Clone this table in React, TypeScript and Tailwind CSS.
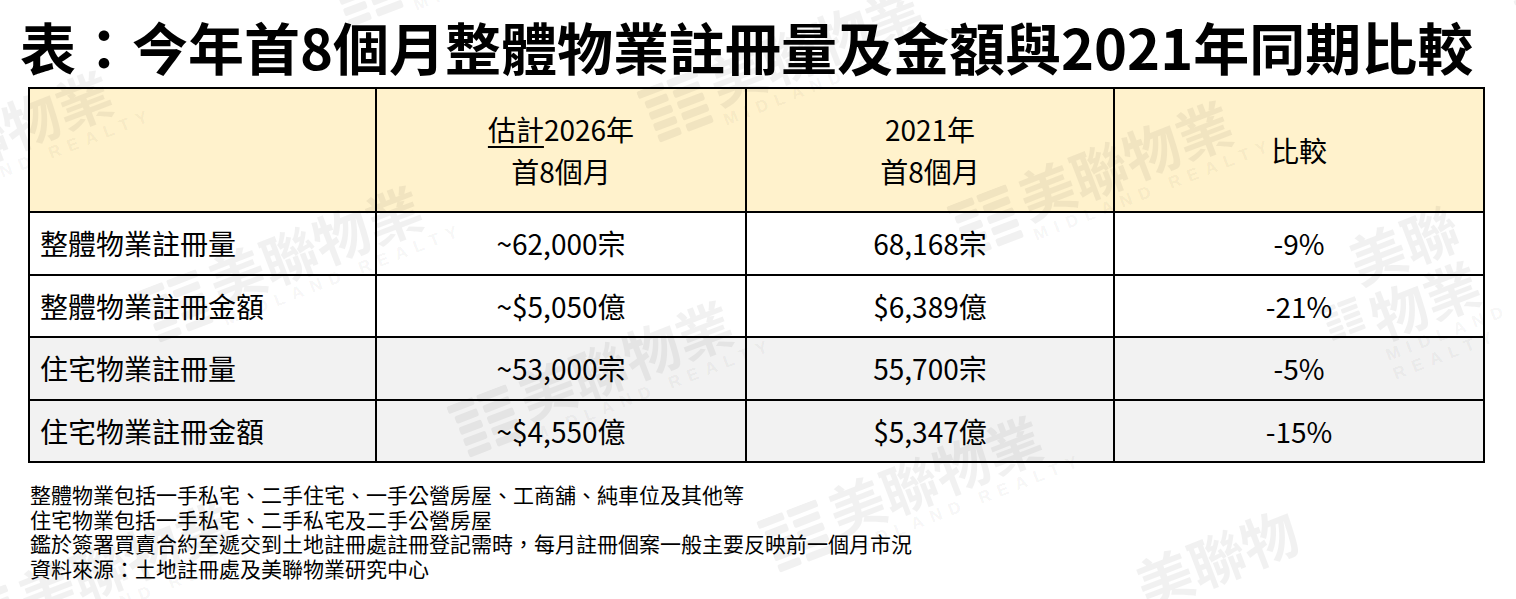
import React from "react";

type Row = {
  label: string;
  est: string;
  prev: string;
  diff: string;
  bg: string;
};

const rows: Row[] = [
  { label: "整體物業註冊量", est: "~62,000宗", prev: "68,168宗", diff: "-9%", bg: "bg-white" },
  { label: "整體物業註冊金額", est: "~$5,050億", prev: "$6,389億", diff: "-21%", bg: "bg-white" },
  { label: "住宅物業註冊量", est: "~53,000宗", prev: "55,700宗", diff: "-5%", bg: "bg-[#f2f2f2]" },
  { label: "住宅物業註冊金額", est: "~$4,550億", prev: "$5,347億", diff: "-15%", bg: "bg-[#f2f2f2]" },
];

const notes = [
  "整體物業包括一手私宅、二手住宅、一手公營房屋、工商舖、純車位及其他等",
  "住宅物業包括一手私宅、二手私宅及二手公營房屋",
  "鑑於簽署買賣合約至遞交到土地註冊處註冊登記需時，每月註冊個案一般主要反映前一個月市況",
  "資料來源：土地註冊處及美聯物業研究中心",
];

// watermark tiles, centre points on a slanted lattice
const marks: [number, number][] = [];
for (let a = -2; a <= 4; a++) {
  for (let b = -2; b <= 3; b++) {
    const x = 330 + a * 310 + b * 500;
    const y = 250 + a * 115 - b * 200;
    if (x > -260 && x < 1780 && y > -160 && y < 760) marks.push([x, y]);
  }
}

const Logo: React.FC = () => (
  <svg width="64" height="58" viewBox="0 0 64 58" fill="currentColor">
    {[0, 1, 2, 3, 4].map((i) => (
      <g key={i}>
        <rect x={i === 0 ? 0 : 4} y={i * 12} width={i === 0 ? 28 : 24} height="8" rx="2" />
        <rect x={i === 0 ? 32 : 34} y={i * 12} width={i === 0 ? 32 : 28} height="8" rx="2" />
      </g>
    ))}
  </svg>
);

const Watermark: React.FC<{ x: number; y: number }> = ({ x, y }) => (
  <div
    aria-hidden="true"
    className="absolute -translate-x-1/2 -translate-y-1/2 rotate-[-21deg] flex items-center gap-2 text-[rgba(0,0,0,0.055)]"
    style={{ left: x - 30, top: y + 10 }}
  >
    <Logo />
    <div className="flex flex-col">
      <span className="text-[56px] leading-[60px] font-bold">美聯物業</span>
      <span className="text-[17px] leading-[20px] font-bold tracking-[0.45em] font-['Liberation_Sans',sans-serif]">
        MIDLAND REALTY
      </span>
    </div>
  </div>
);

const App: React.FC = () => {
  return (
    <div className="relative w-[1516px] h-[599px] overflow-hidden bg-white text-black font-['Noto_Sans_CJK_TC',sans-serif]">
      <h1 className="pl-[20px] pt-[17px] text-[56px] leading-[58px] font-bold whitespace-nowrap">
        表：今年首8個月整體物業註冊量及金額與2021年同期比較
      </h1>

      <table className="ml-[28px] mt-[12px] border-collapse table-fixed text-[28px]">
        <thead>
          <tr className="h-[124px] bg-[#fff2cc]">
            <th className="w-[347px] border-2 border-black"></th>
            <th className="w-[370px] border-2 border-black font-normal leading-[42px]">
              <div>
                <span className="underline decoration-2 underline-offset-[5px]">估計</span>2026年
              </div>
              <div>首8個月</div>
            </th>
            <th className="w-[368px] border-2 border-black font-normal leading-[42px]">
              <div>2021年</div>
              <div>首8個月</div>
            </th>
            <th className="w-[370px] border-2 border-black font-normal">比較</th>
          </tr>
        </thead>
        <tbody>
          {rows.map((r) => (
            <tr key={r.label} className={`h-[62.5px] ${r.bg}`}>
              <td className="border-2 border-black pl-[10px]">{r.label}</td>
              <td className="border-2 border-black text-center">{r.est}</td>
              <td className="border-2 border-black text-center">{r.prev}</td>
              <td className="border-2 border-black text-center">{r.diff}</td>
            </tr>
          ))}
        </tbody>
      </table>

      <div className="pl-[30px] mt-[19px] text-[21px] leading-[24.7px]">
        {notes.map((n) => (
          <div key={n} className="whitespace-nowrap">
            {n}
          </div>
        ))}
      </div>

      <div className="pointer-events-none absolute inset-0">
        {marks.map(([x, y]) => (
          <Watermark key={`${x}-${y}`} x={x} y={y} />
        ))}
      </div>
    </div>
  );
};

export default App;
